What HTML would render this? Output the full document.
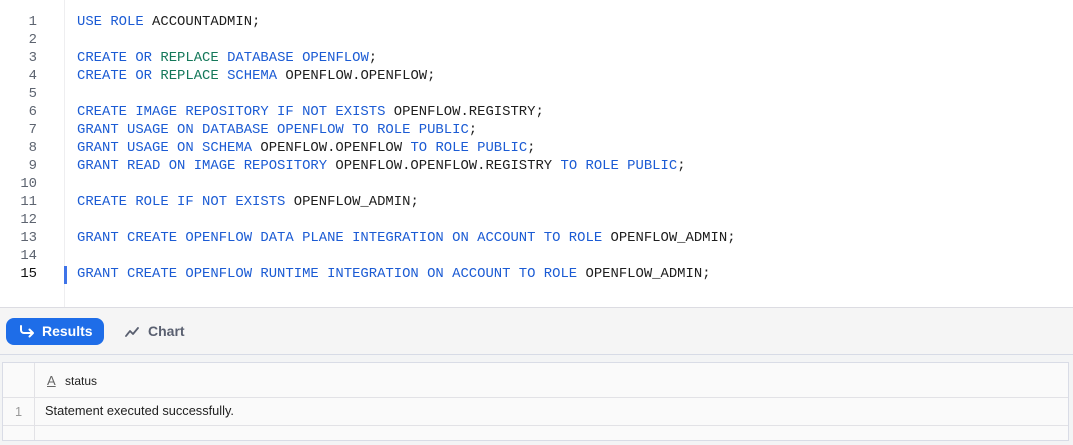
<!DOCTYPE html>
<html><head><meta charset="utf-8"><style>
*{margin:0;padding:0;box-sizing:border-box}
body{width:1073px;height:445px;overflow:hidden;background:#fff;font-family:"Liberation Sans",sans-serif;position:relative}
.ed{position:absolute;left:0;top:0;width:1073px;height:307px;background:#fff}
.gut{position:absolute;left:64px;top:0;width:1px;height:307px;background:#eeeef0}
.ln{position:absolute;left:0;width:37px;text-align:right;font:13.9px/18px "Liberation Mono",monospace;color:#5d6470}
.cl{position:absolute;left:77px;font:13.9px/18px "Liberation Mono",monospace;color:#1e1e1e;white-space:pre}
.k{color:#1b5bd4}.g{color:#14785a}
.bar{position:absolute;left:64px;top:266px;width:3px;height:18px;background:#3f74e8}
.tabs{position:absolute;left:0;top:307px;width:1073px;height:48px;background:#f5f5f5;border-top:1px solid #dcdce2;border-bottom:1px solid #d7dbe6}
.res{position:absolute;left:6px;top:10px;width:98px;height:27px;background:#1e6de8;border-radius:8px;color:#fff;font-weight:bold;font-size:14px}
.res span{position:absolute;left:36px;top:5px}
.chart{position:absolute;left:148px;top:15px;color:#5a6070;font-weight:bold;font-size:14px}
.low{position:absolute;left:0;top:355px;width:1073px;height:90px;background:#f3f4f5}
.tbl{position:absolute;left:2px;top:362px;width:1067px;height:79px;background:#fafafa;border:1px solid #d9dce6}
.r1{position:absolute;left:0;top:34px;width:100%;height:1px;background:#e2e2e6}
.r2{position:absolute;left:0;top:62px;width:100%;height:1px;background:#e2e2e6}
.cd{position:absolute;left:31px;top:0;width:1px;height:100%;background:#e2e2e6}
.t{position:absolute;font-size:12.8px;color:#222}
</style></head><body>
<div class="ed">
<div class="gut"></div>
<div class="ln" style="top:13px">1<br>2<br>3<br>4<br>5<br>6<br>7<br>8<br>9<br>10<br>11<br>12<br>13<br>14<br><span style="color:#111">15</span></div>
<div class="cl" style="top:13px"><span class="k">USE ROLE</span> ACCOUNTADMIN;

<span class="k">CREATE OR</span> <span class="g">REPLACE</span> <span class="k">DATABASE OPENFLOW</span>;
<span class="k">CREATE OR</span> <span class="g">REPLACE</span> <span class="k">SCHEMA</span> OPENFLOW.OPENFLOW;

<span class="k">CREATE IMAGE REPOSITORY IF NOT EXISTS</span> OPENFLOW.REGISTRY;
<span class="k">GRANT USAGE ON DATABASE OPENFLOW TO ROLE PUBLIC</span>;
<span class="k">GRANT USAGE ON SCHEMA</span> OPENFLOW.OPENFLOW <span class="k">TO ROLE PUBLIC</span>;
<span class="k">GRANT READ ON IMAGE REPOSITORY</span> OPENFLOW.OPENFLOW.REGISTRY <span class="k">TO ROLE PUBLIC</span>;

<span class="k">CREATE ROLE IF NOT EXISTS</span> OPENFLOW_ADMIN;

<span class="k">GRANT CREATE OPENFLOW DATA PLANE INTEGRATION ON ACCOUNT TO ROLE</span> OPENFLOW_ADMIN;

<span class="k">GRANT CREATE OPENFLOW RUNTIME INTEGRATION ON ACCOUNT TO ROLE</span> OPENFLOW_ADMIN;</div>
<div class="bar"></div>
</div>
<div class="tabs">
<div class="res"><svg style="position:absolute;left:13px;top:7px" width="16" height="13" viewBox="0 0 16 13"><path d="M2 1v4a3 3 0 0 0 3 3h9M10.5 4.5L14 8l-3.5 3.5" fill="none" stroke="#fff" stroke-width="2" stroke-linecap="round" stroke-linejoin="round"/></svg><span>Results</span></div>
<svg style="position:absolute;left:125px;top:19px" width="14" height="10" viewBox="0 0 14 10"><path d="M1 9L5 4l3 3 5-6" fill="none" stroke="#5a6070" stroke-width="1.8" stroke-linecap="round" stroke-linejoin="round"/></svg>
<div class="chart">Chart</div>
</div>
<div class="low"></div>
<div class="tbl">
<div class="cd"></div><div class="r1"></div><div class="r2"></div>
<div class="t" style="left:44px;top:10px;color:#666;font-size:13px;text-decoration:underline">A</div>
<div class="t" style="left:62px;top:11px;font-size:12px">status</div>
<div class="t" style="left:12px;top:41px;color:#999">1</div>
<div class="t" style="left:42px;top:40px">Statement executed successfully.</div>
</div>
</body></html>
